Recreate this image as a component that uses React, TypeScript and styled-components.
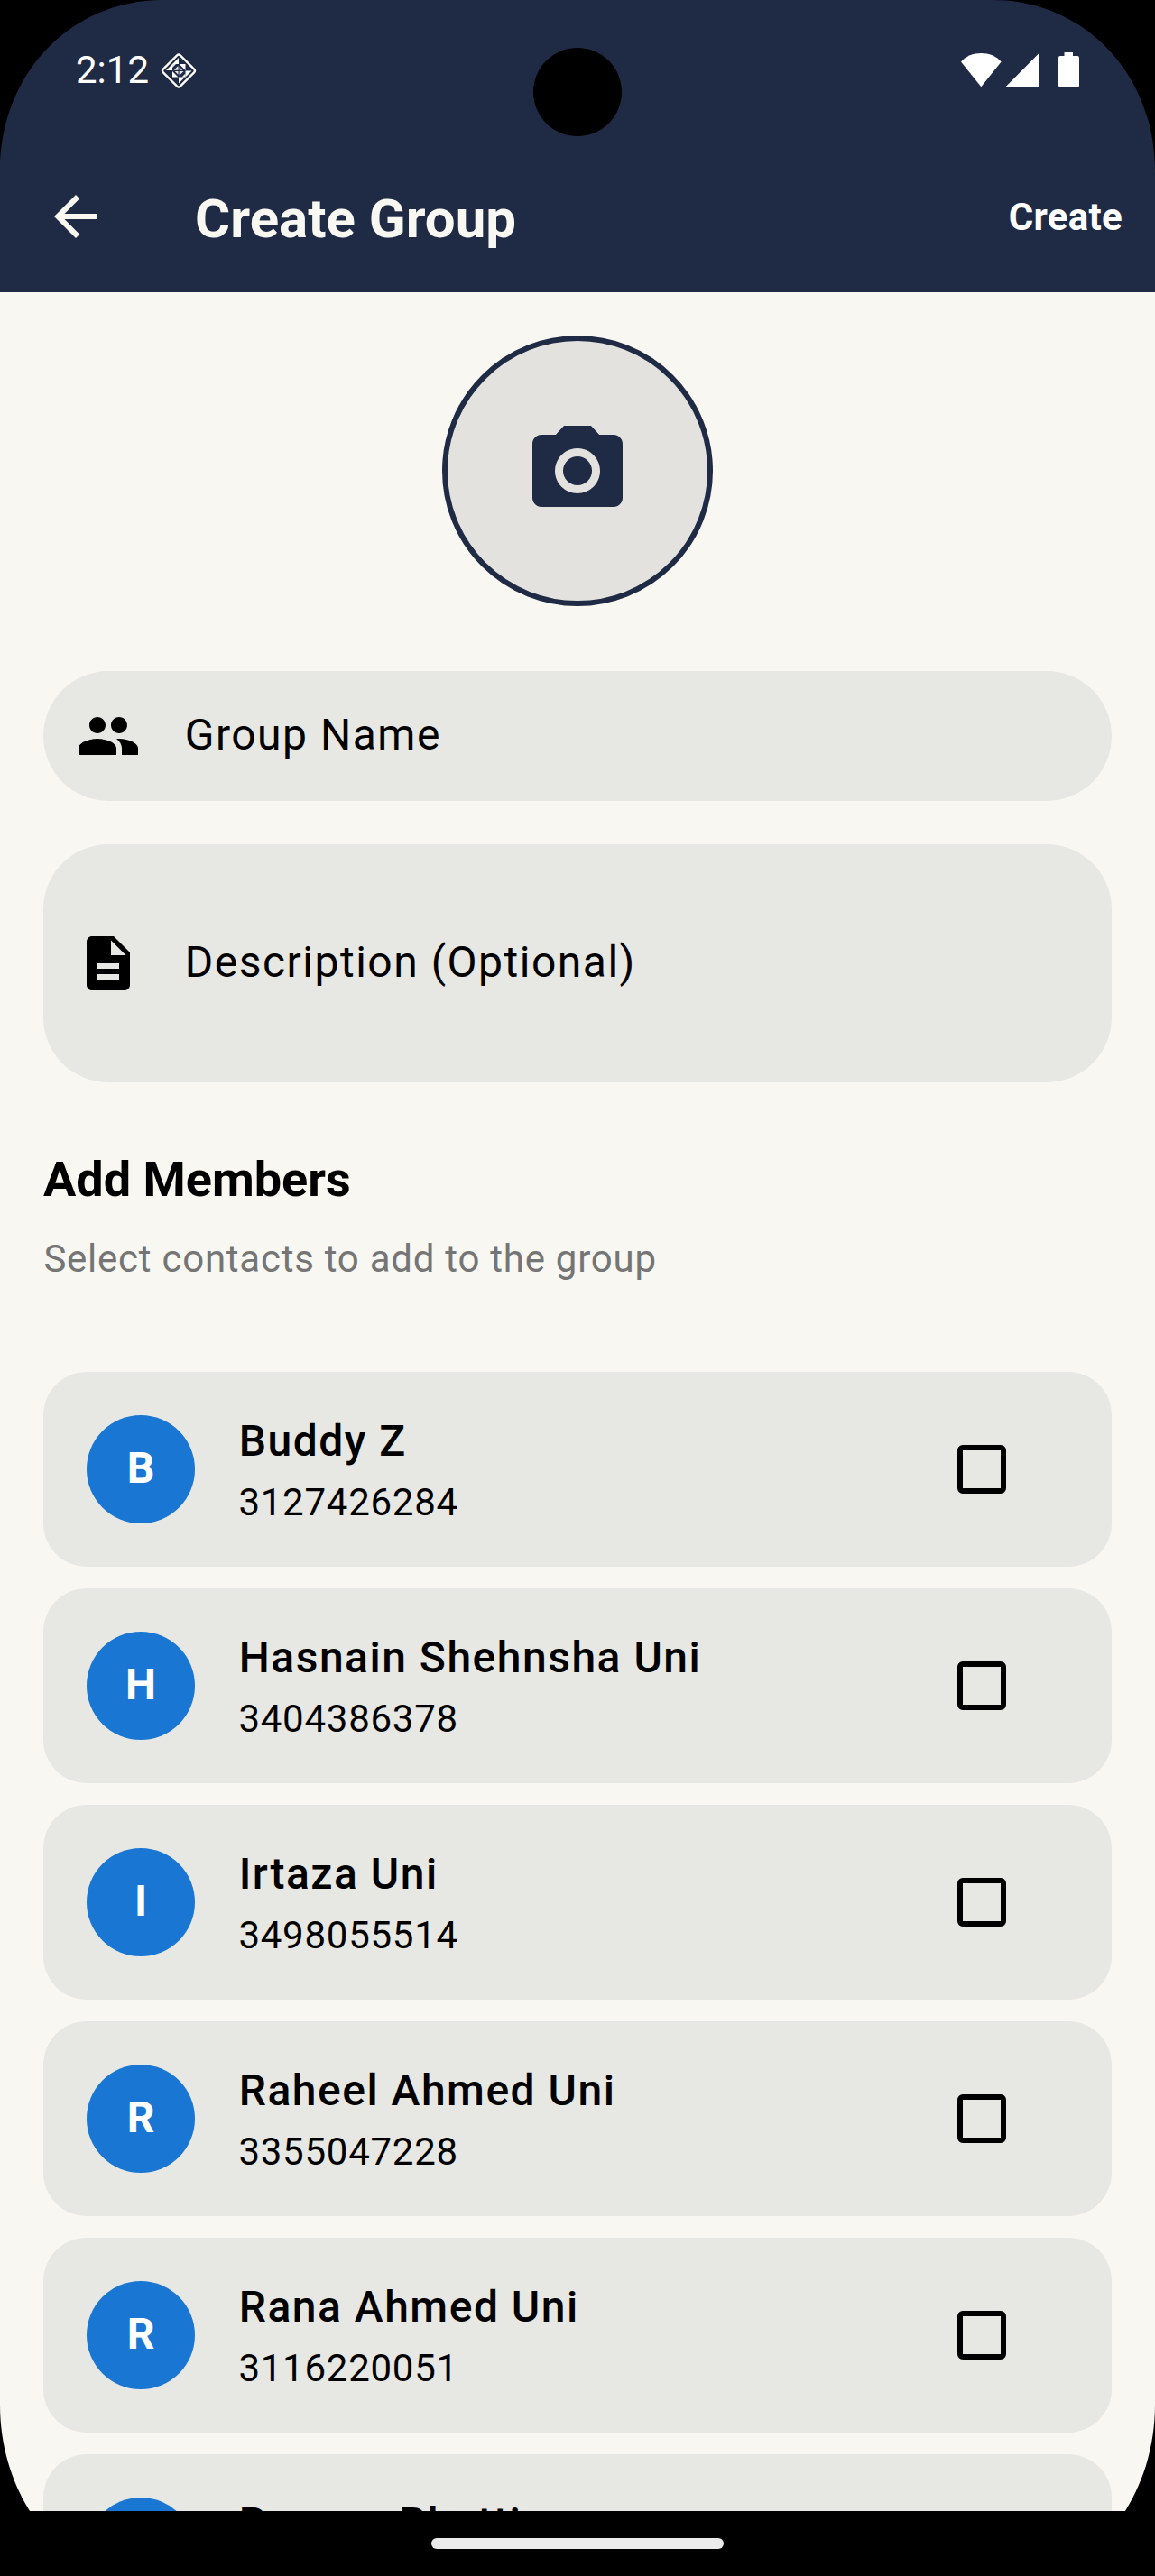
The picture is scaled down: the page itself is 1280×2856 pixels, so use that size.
import React from "react";
import styled, { createGlobalStyle } from "styled-components";
import { MdArrowBack, MdCameraAlt, MdDescription, MdPeople } from "react-icons/md";

const navy = "#1f2a44";
const cream = "#f8f7f2";
const tile = "#e7e8e3";

const GlobalStyle = createGlobalStyle`
  * { box-sizing: border-box; }
  body { margin: 0; background: #000; }
`;

const Device = styled.main`
  width: 1280px;
  height: 2856px;
  position: relative;
  display: flex;
  flex-direction: column;
  background: #000;
  overflow: hidden;
  font-family: Roboto, "Liberation Sans", sans-serif;
  color: #000;
`;

const Screen = styled.div`
  height: 2784px;
  flex: none;
  display: flex;
  flex-direction: column;
  overflow: hidden;
  background: ${cream};
`;

const Header = styled.header`
  height: 324px;
  flex: none;
  display: flex;
  flex-direction: column;
  background: ${navy};
  color: ${cream};
`;

const StatusBar = styled.div`
  height: 156px;
  display: flex;
  justify-content: space-between;
  align-items: center;
  padding: 0 84px;
  color: #fff;
`;

const StatusGroup = styled.div<{ $gap: number }>`
  display: flex;
  align-items: center;
  gap: ${(p) => p.$gap}px;
`;

const Clock = styled.time`
  font-size: 42px;
  line-height: 50px;
`;

const Toolbar = styled.div`
  height: 168px;
  display: flex;
  align-items: center;
  padding: 0 36px 0 48px;
`;

const Title = styled.h1`
  margin: 6px 0 0 96px;
  flex: 1;
  font-size: 60px;
  line-height: 70px;
  font-weight: 700;
`;

const CreateButton = styled.button`
  border: 0;
  margin: 2px 0 0;
  padding: 0;
  background: none;
  color: #fff;
  font: 700 42px/50px Roboto, "Liberation Sans", sans-serif;
  letter-spacing: 0.3px;
`;

const Content = styled.div`
  display: flex;
  flex-direction: column;
  padding: 48px 48px 0;
`;

const PhotoPicker = styled.div`
  width: 300px;
  height: 300px;
  align-self: center;
  display: flex;
  align-items: center;
  justify-content: center;
  border: 6px solid ${navy};
  border-radius: 50%;
  background: #e3e2de;
  color: ${navy};
`;

const Fields = styled.div`
  display: flex;
  flex-direction: column;
  gap: 48px;
  margin-top: 72px;
`;

const Field = styled.div<{ $height: number }>`
  height: ${(p) => p.$height}px;
  display: flex;
  align-items: center;
  gap: 48px;
  padding-left: 36px;
  border-radius: 72px;
  background: ${tile};
`;

const FieldLabel = styled.span`
  margin-top: -2px;
  padding-left: 0.75px;
  font-size: 48px;
  line-height: 56px;
  letter-spacing: 1.5px;
`;

const SectionTitle = styled.h2`
  margin: 76px 0 0;
  font-size: 54px;
  line-height: 64px;
  font-weight: 700;
`;

const SectionHint = styled.p`
  margin: 31px 0 0;
  padding-left: 0.4px;
  font-size: 42px;
  line-height: 50px;
  letter-spacing: 0.75px;
  color: #757575;
`;

const MemberList = styled.ul`
  display: flex;
  flex-direction: column;
  gap: 24px;
  margin: 100px 0 0;
  padding: 0;
  list-style: none;
`;

const MemberRow = styled.li`
  height: 216px;
  display: flex;
  align-items: center;
  padding: 0 117px 0 48px;
  border-radius: 48px;
  background: ${tile};
`;

const Avatar = styled.div`
  width: 120px;
  height: 120px;
  display: flex;
  align-items: center;
  justify-content: center;
  padding-bottom: 4px;
  border-radius: 50%;
  background: #1976d2;
  color: #fff;
  font-size: 48px;
  font-weight: 700;
`;

const MemberText = styled.div`
  flex: 1;
  display: flex;
  flex-direction: column;
  gap: 12px;
  margin-left: 48px;
  padding-top: 2px;
`;

const MemberName = styled.span`
  padding-left: 0.75px;
  font-size: 48px;
  line-height: 60px;
  font-weight: 500;
  letter-spacing: 1.5px;
  white-space: nowrap;
`;

const MemberPhone = styled.span`
  min-height: 52px;
  padding-left: 0.4px;
  font-size: 42px;
  line-height: 52px;
  letter-spacing: 0.75px;
`;

const Checkbox = styled.span`
  width: 54px;
  height: 54px;
  border: 6px solid #000;
  border-radius: 6px;
`;

const NavigationBar = styled.footer`
  height: 72px;
  display: flex;
  align-items: center;
  justify-content: center;
  background: #000;
`;

const HomeHandle = styled.div`
  width: 324px;
  height: 12px;
  border-radius: 6px;
  background: #ebebeb;
`;

const CameraHole = styled.div`
  position: absolute;
  left: 591px;
  top: 53px;
  width: 98px;
  height: 98px;
  border-radius: 50%;
  background: #000;
`;

const Corners = styled.svg`
  position: absolute;
  inset: 0;
  pointer-events: none;
`;

const members = [
  { name: "Buddy Z", phone: "3127426284" },
  { name: "Hasnain Shehnsha Uni", phone: "3404386378" },
  { name: "Irtaza Uni", phone: "3498055514" },
  { name: "Raheel Ahmed Uni", phone: "3355047228" },
  { name: "Rana Ahmed Uni", phone: "3116220051" },
  { name: "Rayyan Bhatti", phone: "" },
];

function DiamondIcon() {
  return (
    <svg width="42" height="43" viewBox="0 0 42 43" fill="none">
      <rect
        x="7.6"
        y="8.1"
        width="26.8"
        height="26.8"
        rx="2.6"
        transform="rotate(45 21 21.5)"
        stroke="#fff"
        strokeWidth="2.3"
      />
      <path
        fill="#fff"
        d="M21 7V14H14zM7 21L14 14V21zM21 28.500H28L21 35.500zM28.500 21.500H35.500L28.500 28.500zM21.500 14H28.500V21zM14 22V28.500H20.500z"
      />
      <path
        fill="#fff"
        fillOpacity="0.9"
        d="M20.500 16V20.800H15.700zM21.700 17V20.800H25.500zM20.500 25.800V22H16.700zM21.700 26.800V22H26.500zM14 14H18L14 18zM28.500 28.500H24.500L28.500 24.500z"
      />
    </svg>
  );
}

function SignalIcons() {
  return (
    <svg width="131" height="40" viewBox="0 0 131 40" fill="#fff">
      <path d="M0 10.500C5.500 4 13.500 1 22.300 1S39 4 44.600 10.500L22.300 38.300z" />
      <path d="M49 38.700L86.500 1v37.700z" />
      <path d="M114.500 0h9.500v4h5a2 2 0 0 1 2 2v30.700a2 2 0 0 1-2 2h-19a2 2 0 0 1-2-2V6a2 2 0 0 1 2-2h4.500z" />
    </svg>
  );
}

export default function App() {
  return (
    <Device>
      <GlobalStyle />
      <Screen>
        <Header>
          <StatusBar>
            <StatusGroup $gap={12}>
              <Clock>2:12</Clock>
              <DiamondIcon />
            </StatusGroup>
            <StatusGroup $gap={0}>
              <SignalIcons />
            </StatusGroup>
          </StatusBar>
          <Toolbar>
            <MdArrowBack size={72} />
            <Title>Create Group</Title>
            <CreateButton>Create</CreateButton>
          </Toolbar>
        </Header>
        <Content>
          <PhotoPicker>
            <MdCameraAlt size={120} />
          </PhotoPicker>
          <Fields>
            <Field $height={144}>
              <MdPeople size={72} />
              <FieldLabel>Group Name</FieldLabel>
            </Field>
            <Field $height={264}>
              <MdDescription size={72} />
              <FieldLabel>Description (Optional)</FieldLabel>
            </Field>
          </Fields>
          <SectionTitle>Add Members</SectionTitle>
          <SectionHint>Select contacts to add to the group</SectionHint>
          <MemberList>
            {members.map((m) => (
              <MemberRow key={m.name}>
                <Avatar>{m.name[0]}</Avatar>
                <MemberText>
                  <MemberName>{m.name}</MemberName>
                  <MemberPhone>{m.phone}</MemberPhone>
                </MemberText>
                <Checkbox />
              </MemberRow>
            ))}
          </MemberList>
        </Content>
      </Screen>
      <NavigationBar>
        <HomeHandle />
      </NavigationBar>
      <CameraHole />
      <Corners width="1280" height="2856" viewBox="0 0 1280 2856">
        <path d="M0 0H180C80 0 0 80 0 190zM1280 0H1100C1200 0 1280 80 1280 190z" />
        <path d="M0 2856V2666C0 2710 12 2750 33 2784V2856zM1280 2856V2666C1280 2710 1268 2750 1247 2784V2856z" />
      </Corners>
    </Device>
  );
}
